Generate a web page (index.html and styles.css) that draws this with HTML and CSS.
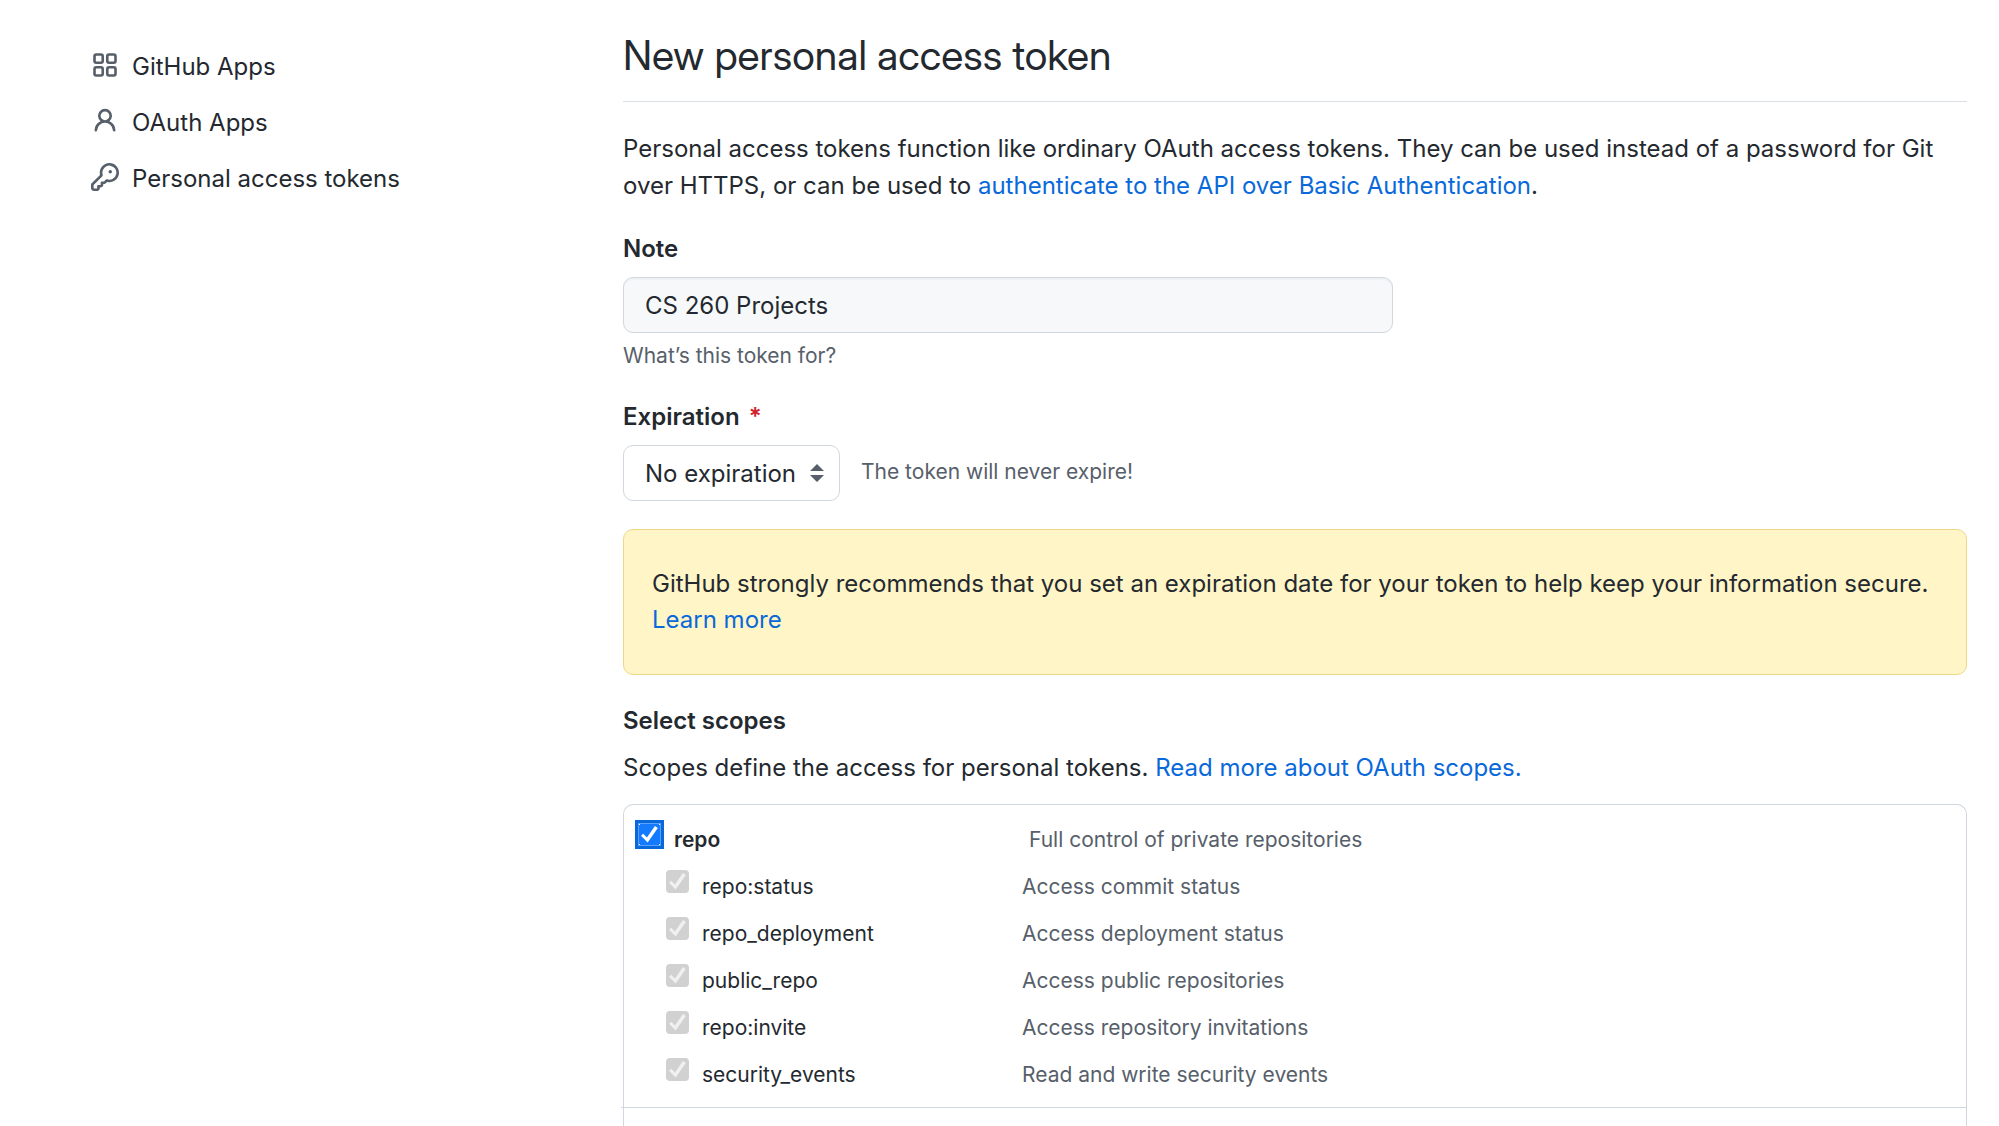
FILE: index.html
```html
<!DOCTYPE html>
<html lang="en">
<head>
<meta charset="utf-8">
<meta name="viewport" content="width=device-width, initial-scale=1">
<title>New personal access token</title>
<link rel="stylesheet" href="styles.css">
</head>
<body>
<div class="layout">
  <nav class="sidebar" aria-label="Developer settings">
    <a class="nav-item" href="#apps">
      <svg class="nav-icon" viewBox="0 0 16 16" aria-hidden="true"><g fill="none" stroke="currentColor" stroke-width="1.5"><rect x="2" y="2" width="4.700" height="4.700" rx="1"/><rect x="9.300" y="2" width="4.700" height="4.700" rx="1"/><rect x="2" y="9.300" width="4.700" height="4.700" rx="1"/><rect x="9.300" y="9.300" width="4.700" height="4.700" rx="1"/></g></svg>
      <span>GitHub Apps</span>
    </a>
    <a class="nav-item" href="#oauth">
      <svg class="nav-icon" viewBox="0 0 16 16" aria-hidden="true"><path fill="currentColor" fill-rule="evenodd" d="M10.5 5a2.5 2.5 0 11-5 0 2.500 2.500 0 015 0zm.061 3.073a4 4 0 10-5.123 0 6.004 6.004 0 00-3.431 5.142.75.75 0 001.498.07 4.500 4.500 0 018.990 0 .75.75 0 101.498-.070 6.005 6.005 0 00-3.432-5.142z"/></svg>
      <span>OAuth Apps</span>
    </a>
    <a class="nav-item" href="#tokens">
      <svg class="nav-icon" viewBox="0 0 16 16" aria-hidden="true"><path fill="currentColor" fill-rule="evenodd" d="M6.5 5.5a4 4 0 112.731 3.795.75.75 0 00-.768.180L7.440 10.500H6.250a.75.75 0 00-.75.75v1.190l-.060.060H4.250a.75.75 0 00-.75.75v1.190l-.060.060H1.750a.25.25 0 01-.25-.25v-1.690l5.024-5.023a.75.75 0 00.181-.768A3.995 3.995 0 016.500 5.500zm4-5.500a5.500 5.500 0 00-5.348 6.788L.220 11.720a.75.75 0 00-.220.530v2C0 15.216.784 16 1.750 16h2a.75.75 0 00.530-.220l.500-.500a.75.75 0 00.220-.530V14h.750a.75.75 0 00.530-.220l.500-.500a.75.75 0 00.220-.530V12h.750a.75.75 0 00.530-.220l.932-.932A5.500 5.500 0 1010.500 0zm.500 6a1 1 0 100-2 1 1 0 000 2z"/></svg>
      <span>Personal access tokens</span>
    </a>
  </nav>

  <main class="content">
    <h1 class="title">New personal access token</h1>
    <p class="intro">Personal access tokens function like ordinary OAuth access tokens. They can be used instead of a password for Git over HTTPS, or can be used to <a href="#basic-auth">authenticate to the API over Basic Authentication</a>.</p>

    <form class="token-form">
      <div class="field">
        <label class="field-label" for="note">Note</label>
        <input class="text-input" id="note" type="text" value="CS 260 Projects" aria-describedby="note-help">
        <p class="help" id="note-help">What’s this token for?</p>
      </div>

      <div class="field">
        <label class="field-label" for="expiration">Expiration <span class="required">*</span></label>
        <div class="expiration-row">
          <select class="select" id="expiration"><option>No expiration</option></select>
          <span class="help-inline">The token will never expire!</span>
        </div>
      </div>

      <div class="flash">GitHub strongly recommends that you set an expiration date for your token to help keep your information secure. <a href="#learn">Learn more</a></div>

      <h2 class="scopes-title">Select scopes</h2>
      <p class="scopes-intro">Scopes define the access for personal tokens. <a href="#scopes">Read more about OAuth scopes.</a></p>

      <div class="scopes">
        <ul class="scope-group">
          <li class="scope scope-parent">
            <label class="scope-name"><input class="check check-focus" type="checkbox" checked>repo</label>
            <span class="scope-desc">Full control of private repositories</span>
          </li>
          <li class="scope">
            <label class="scope-name"><input class="check" type="checkbox" checked disabled>repo:status</label>
            <span class="scope-desc">Access commit status</span>
          </li>
          <li class="scope">
            <label class="scope-name"><input class="check" type="checkbox" checked disabled>repo_deployment</label>
            <span class="scope-desc">Access deployment status</span>
          </li>
          <li class="scope">
            <label class="scope-name"><input class="check" type="checkbox" checked disabled>public_repo</label>
            <span class="scope-desc">Access public repositories</span>
          </li>
          <li class="scope">
            <label class="scope-name"><input class="check" type="checkbox" checked disabled>repo:invite</label>
            <span class="scope-desc">Access repository invitations</span>
          </li>
          <li class="scope">
            <label class="scope-name"><input class="check" type="checkbox" checked disabled>security_events</label>
            <span class="scope-desc">Read and write security events</span>
          </li>
        </ul>
      </div>
    </form>
  </main>
</div>
</body>
</html>
```
FILE: styles.css
```css
* { box-sizing: border-box; }

body {
  margin: 0;
  background: #fff;
  color: #24292f;
  font-family: Inter, "Liberation Sans", sans-serif;
  font-size: 24px;
  line-height: 37px;
}

a { color: #0969da; text-decoration: none; }
h1, h2, p, ul { margin: 0; padding: 0; }

.layout {
  display: grid;
  grid-template-columns: 3fr 8fr;
  gap: 28px;
  min-height: 100vh;
  padding: 0 32px 0 91px;
}

/* Sidebar */
.sidebar {
  display: flex;
  flex-direction: column;
  gap: 19px;
  padding-top: 48px;
}
.nav-item {
  display: flex;
  align-items: center;
  gap: 13px;
  color: #24292f;
}
.nav-icon {
  width: 28px;
  height: 28px;
  flex: none;
  margin-bottom: 3px;
  color: #57606a;
}

/* Main column */
.content {
  display: flex;
  flex-direction: column;
  min-width: 0;
}
.title {
  padding: 24px 0 14px;
  border-bottom: 1px solid #d8dee4;
  font-family: "Inter Display", Inter, "Liberation Sans", sans-serif;
  font-size: 41px;
  font-weight: 400;
  line-height: 63px;
}
.intro { margin-top: 28px; }

.token-form {
  display: flex;
  flex: 1;
  flex-direction: column;
}
.field { margin-top: 26px; }
.field-label {
  display: block;
  font-weight: 600;
}
.required {
  margin-left: 3px;
  color: #cf222e;
}
.text-input,
.select {
  display: block;
  height: 56px;
  border: 1px solid #d0d7de;
  border-radius: 10px;
  color: #24292f;
  font: inherit;
}
.text-input {
  width: 770px;
  max-width: 100%;
  margin-top: 10px;
  padding: 0 21px;
  background: #f6f8fa;
  box-shadow: inset 0 2px 0 rgba(208, 215, 222, 0.2);
}
.help {
  margin-top: 6px;
  color: #57606a;
  font-size: 21px;
  line-height: 33px;
}
.expiration-row {
  display: flex;
  align-items: center;
  gap: 21px;
  margin-top: 10px;
}
.select {
  width: 217px;
  padding: 0 21px;
  appearance: none;
  background: #fff url("data:image/svg+xml,%3Csvg xmlns='http://www.w3.org/2000/svg' width='14' height='18' viewBox='0 0 14 18'%3E%3Cpath fill='%2357606a' d='M0 7h14L7 0zM0 11h14l-7 7z'/%3E%3C/svg%3E") no-repeat right 15px center;
}
.help-inline {
  margin-bottom: 3px;
  color: #57606a;
  font-size: 21px;
}
.flash {
  margin-top: 28px;
  padding: 36px 28px;
  border: 1px solid #eed888;
  border-radius: 10px;
  background: #fff5c7;
  line-height: 36px;
}

/* Scopes */
.scopes-title {
  margin-top: 27px;
  font-size: 24px;
  font-weight: 600;
}
.scopes-intro { margin-top: 10px; }
.scopes {
  flex: 1;
  margin-top: 18px;
  border: 1px solid #d0d7de;
  border-bottom: 0;
  border-radius: 10px 10px 0 0;
  font-size: 21px;
}
.scope-group {
  margin-left: -3px;
  padding: 11px 0 9px 45px;
  border-bottom: 1px solid #d0d7de;
  list-style: none;
}
.scope {
  display: grid;
  grid-template-columns: 356px 1fr;
  align-items: center;
  height: 47px;
}
.scope-name {
  display: flex;
  align-items: center;
  gap: 13px;
}
.scope-desc { color: #57606a; }
.scope-parent {
  grid-template-columns: 394px 1fr;
  margin-left: -31px;
}
.scope-parent .scope-name {
  gap: 10px;
  font-weight: 600;
}
.check {
  display: grid;
  place-items: center;
  width: 23px;
  height: 23px;
  margin: 0 0 10px;
  appearance: none;
  border-radius: 4px;
  background: #d1d1d1;
  color: #f0f0f0;
}
.check::before {
  content: "";
  width: 17px;
  height: 17px;
  background: currentColor;
  clip-path: polygon(0 58%, 13% 46%, 35% 68%, 82% 0, 99% 12%, 39% 97%);
}
.check-focus {
  width: 29px;
  height: 29px;
  border: 3px solid #0969da;
  border-radius: 0;
  background:
    linear-gradient(#fff, #fff) 0 0 / 2px 2px no-repeat,
    linear-gradient(#fff, #fff) 100% 0 / 2px 2px no-repeat,
    linear-gradient(#fff, #fff) 0 100% / 2px 2px no-repeat,
    linear-gradient(#fff, #fff) 100% 100% / 2px 2px no-repeat,
    #147aff;
  box-shadow: inset 0 0 0 1px #5aa2ff;
  color: #fff;
}
```
